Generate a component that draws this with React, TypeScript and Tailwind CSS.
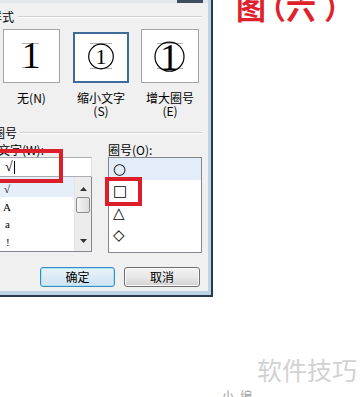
import React from "react";

function Box1() {
  return (
    <svg width="55" height="52" viewBox="0 0 55 52">
      <line x1="18" y1="13.5" x2="35" y2="13.5" stroke="#b0b0b0" strokeWidth="1" />
      <line x1="18" y1="37.5" x2="35" y2="37.5" stroke="#b0b0b0" strokeWidth="1" />
      <text x="27" y="38" textAnchor="middle" fontFamily="Liberation Serif" fontSize="37" fill="#000">
        1
      </text>
    </svg>
  );
}

function Box2() {
  return (
    <svg width="52" height="47" viewBox="0 0 52 47">
      <line x1="15" y1="9.5" x2="37" y2="9.5" stroke="#b0b0b0" strokeWidth="1" />
      <line x1="15" y1="34.5" x2="37" y2="34.5" stroke="#b0b0b0" strokeWidth="1" />
      <circle cx="26" cy="22.5" r="12.3" fill="none" stroke="#000" strokeWidth="1.2" />
      <text x="26" y="30" textAnchor="middle" fontFamily="Liberation Serif" fontSize="22" fill="#000">
        1
      </text>
    </svg>
  );
}

function Box3() {
  return (
    <svg width="56" height="52" viewBox="0 0 56 52">
      <line x1="15" y1="13.5" x2="41" y2="13.5" stroke="#b0b0b0" strokeWidth="1" />
      <line x1="15" y1="38.5" x2="41" y2="38.5" stroke="#b0b0b0" strokeWidth="1" />
      <circle cx="27.5" cy="26.7" r="14.5" fill="none" stroke="#000" strokeWidth="1.2" />
      <text x="27.5" y="39.5" textAnchor="middle" fontFamily="Liberation Serif" fontSize="38" fill="#000">
        1
      </text>
    </svg>
  );
}

function UpArrow() {
  return (
    <svg width="7" height="4" viewBox="0 0 7 4">
      <path d="M0 4 L3.5 0 L7 4 Z" fill="#333" />
    </svg>
  );
}

function DownArrow() {
  return (
    <svg width="7" height="4" viewBox="0 0 7 4">
      <path d="M0 0 L3.5 4 L7 0 Z" fill="#333" />
    </svg>
  );
}

export default function App() {
  return (
    <div className="w-[361px] h-[397px] bg-white overflow-hidden relative font-['Noto_Sans_CJK_SC','Liberation_Sans',sans-serif] text-black">
      <div className="flex items-start">
        {/* Dialog */}
        <div className="w-[213px] h-[297px] shrink-0 border-r-2 border-b-2 border-[#2a3a4c] bg-[#bcd3e8] pr-[3px] pb-[4px]">
          <div className="h-full bg-[#f0f0f0] flex flex-col overflow-hidden">
            {/* top strip */}
            <div className="h-[3px] flex shrink-0">
              <div className="w-[177px] bg-[#e2e5ea]" />
              <div className="w-[26px] bg-[#3f4c5d]" />
              <div className="flex-1 bg-[#e2e5ea]" />
            </div>

            {/* Section: 样式 */}
            <div className="mt-[8px] ml-[-10px] w-[212px] h-[12px] flex items-center shrink-0">
              <span className="text-[12px] leading-[12px] whitespace-nowrap">样式</span>
              <div className="ml-[4px] flex-1 h-[2px] border-t border-[#d0d0d0] border-b border-b-white" />
            </div>

            {/* Preview boxes */}
            <div className="mt-[6px] ml-[3px] flex items-start shrink-0">
              <div className="w-[57px] h-[54px] bg-white border border-[#a3a3a3]">
                <Box1 />
              </div>
              <div className="ml-[13px] mt-[3px] w-[56px] h-[51px] bg-white border-2 border-[#3f6b98]">
                <Box2 />
              </div>
              <div className="ml-[12px] w-[58px] h-[54px] bg-white border border-[#a3a3a3]">
                <Box3 />
              </div>
            </div>

            {/* Labels */}
            <div className="mt-[8px] ml-[3px] flex items-start text-[12px] leading-[13px] text-center shrink-0">
              <div className="w-[57px]">无(N)</div>
              <div className="ml-[13px] w-[56px]">
                缩小文字
                <br />
                (S)
              </div>
              <div className="ml-[12px] w-[58px]">
                增大圈号
                <br />
                (E)
              </div>
            </div>

            {/* Section: 圈号 */}
            <div className="mt-[10px] ml-[-7px] w-[209px] h-[12px] flex items-center shrink-0">
              <span className="text-[12px] leading-[12px] whitespace-nowrap">圈号</span>
              <div className="ml-[3px] flex-1 h-[2px] border-t border-[#d0d0d0] border-b border-b-white" />
            </div>

            {/* Two columns */}
            <div className="mt-[5px] flex items-start shrink-0">
              {/* Left column */}
              <div className="ml-[-1px] w-[93px] flex flex-col">
                <div className="text-[12px] leading-[12px] whitespace-nowrap ml-[-1px]">文字(W):</div>
                <div className="mt-[1px] h-[20px] bg-white border border-[#abadb3] border-r-[#dbdfe6] flex items-center pl-[5px]">
                  <span className="font-['Liberation_Serif',serif] text-[14px] leading-[14px]">√</span>
                  <span className="ml-[1px] w-px h-[13px] bg-black" />
                </div>
                <div className="h-[75px] bg-white border border-[#828790] border-t-0 flex">
                  <div className="flex-1 flex flex-col font-['Liberation_Serif',serif] text-[11px]">
                    <div className="h-[20px] bg-[#e6eefa] flex items-center pl-[4px] pt-[4px]">√</div>
                    <div className="h-[18px] flex items-center pl-[3px] pt-[2px]">A</div>
                    <div className="h-[18px] flex items-center pl-[5px]">a</div>
                    <div className="h-[18px] flex items-center pl-[6px]">!</div>
                  </div>
                  <div className="w-[17px] bg-[#ececec] border-l border-[#e4e4e4] flex flex-col items-center">
                    <div className="h-[20px] flex items-end justify-center pb-[6px]">
                      <UpArrow />
                    </div>
                    <div className="w-[14px] h-[16px] rounded-[2px] border border-[#8d8d8d] bg-linear-to-r from-[#f4f4f4] to-[#dcdcdc]" />
                    <div className="flex-1" />
                    <div className="h-[14px] flex items-start justify-center pt-[2px]">
                      <DownArrow />
                    </div>
                  </div>
                </div>
              </div>

              {/* Right column */}
              <div className="ml-[16px] w-[94px] flex flex-col">
                <div className="text-[12px] leading-[12px] whitespace-nowrap">圈号(O):</div>
                <div className="mt-[1px] h-[96px] bg-white border border-[#828790] flex flex-col font-['DejaVu_Sans',sans-serif] text-[15px] leading-none">
                  <div className="h-[22px] shrink-0 bg-[#e3edf9] flex items-center pl-[4px]">○</div>
                  <div className="h-[22px] shrink-0 flex items-center pl-[4px]">□</div>
                  <div className="h-[22px] shrink-0 flex items-center pl-[4px]">△</div>
                  <div className="h-[22px] shrink-0 flex items-center pl-[4px]">◇</div>
                </div>
              </div>
            </div>

            {/* Buttons */}
            <div className="mt-[14px] ml-[40px] flex gap-[9px] shrink-0">
              <div className="w-[75px] h-[20px] rounded-[3px] border border-[#3c8cbf] bg-linear-to-b from-[#e8f3fa] to-[#cfe3f0] shadow-[inset_0_0_0_1px_#a9e2f6] flex items-center justify-center text-[12px] leading-none">
                确定
              </div>
              <div className="w-[76px] h-[20px] rounded-[3px] border border-[#707070] bg-linear-to-b from-[#f2f2f2] via-[#e8e8e8] to-[#d2d2d2] shadow-[inset_0_0_0_1px_#fbfbfb] flex items-center justify-center text-[12px] leading-none">
                取消
              </div>
            </div>
          </div>
        </div>

        {/* Red title */}
        <div className="ml-[23px] mt-[-9px] shrink-0 flex text-[30px] leading-[30px] font-bold text-[#e0202a] whitespace-nowrap [text-spacing-trim:space-all]">
          <span className="w-[30px] shrink-0">图</span>
          <span className="ml-[-10px] w-[30px] shrink-0">（</span>
          <span className="w-[30px] shrink-0">六</span>
          <span className="ml-[8px] w-[30px] shrink-0">）</span>
        </div>
      </div>

      {/* Watermark */}
      <div className="mt-[60px] pl-[257px] text-[25px] leading-[25px] text-[#d2d2d2] whitespace-nowrap">软件技巧</div>
      <div className="mt-[8px] pl-[222px] text-[12px] leading-[12px] text-[#a0a0a0] tracking-[6px] whitespace-nowrap">小编</div>

      {/* Red annotation boxes */}
      <div className="absolute left-[-10px] top-[149px] w-[73px] h-[34px] border-4 border-[#dc1e2a]" />
      <div className="absolute left-[105px] top-[177px] w-[37px] h-[29px] border-4 border-[#dc1e2a]" />
    </div>
  );
}
